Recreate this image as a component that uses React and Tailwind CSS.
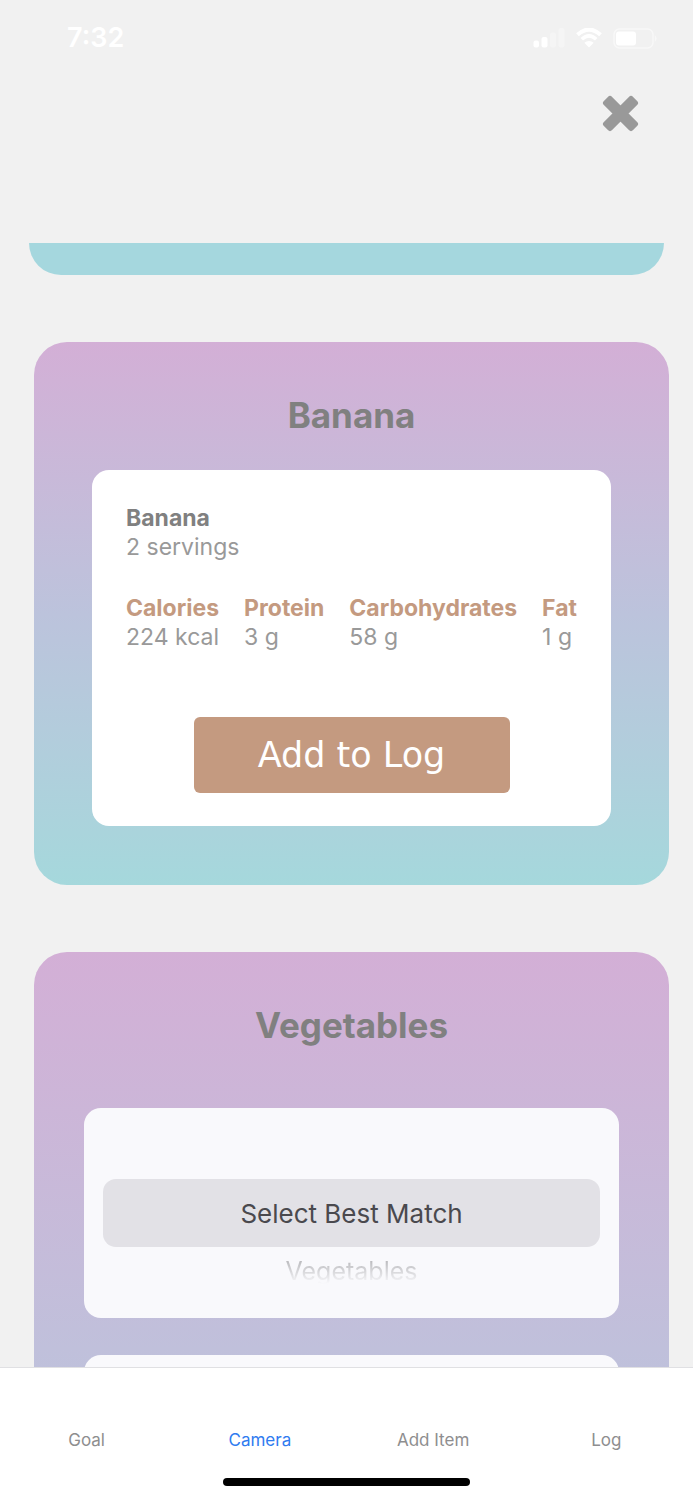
import { useState } from "react";

const nutrients = [
  { label: "Calories", value: "224 kcal" },
  { label: "Protein", value: "3 g" },
  { label: "Carbohydrates", value: "58 g" },
  { label: "Fat", value: "1 g" },
];

const tabs = ["Goal", "Camera", "Add Item", "Log"];

const StatusBar = () => {
  return (
    <div className="flex h-[76px] items-center justify-between pr-[35px] pl-[67px] text-white">
      <span className="text-[27px] leading-8 font-semibold">7:32</span>
      <div className="flex items-center gap-[11px]">
        <svg width="32" height="20" viewBox="0 0 32 20" fill="currentColor">
          <rect x="0.5" y="12.5" width="5.5" height="7" rx="2" />
          <rect x="8.5" y="9" width="6" height="10.5" rx="2" />
          <rect x="17" y="4.5" width="6" height="15" rx="2" opacity="0.3" />
          <rect x="25.5" y="0" width="6" height="19.5" rx="2" opacity="0.3" />
        </svg>
        <svg width="26" height="20" viewBox="0 0 26 20" fill="none">
          <path
            d="M1.5 6.7 Q13 -3.6 24.5 6.7"
            stroke="currentColor"
            strokeWidth="4"
          />
          <path
            d="M5.8 11.3 Q13 4.6 20.2 11.3"
            stroke="currentColor"
            strokeWidth="3.6"
          />
          <path d="M8.3 14.8 Q13 11 17.7 14.8 L13 19.6 Z" fill="currentColor" />
        </svg>
        <svg width="45" height="21" viewBox="0 0 45 21" fill="none">
          <rect
            x="1"
            y="1"
            width="39"
            height="19"
            rx="5.5"
            stroke="currentColor"
            strokeWidth="1.5"
            opacity="0.5"
          />
          <rect x="3" y="3.5" width="20" height="14" rx="3" fill="currentColor" />
          <path d="M41.8 7 Q45.5 10.5 41.8 14 Z" fill="currentColor" opacity="0.5" />
        </svg>
      </div>
    </div>
  );
};

const FoodCard = ({ title, children }) => {
  return (
    <section className="rounded-[33px] bg-linear-to-b from-[#d3afd6] via-[#bcc3dc] to-[#a5d8dc] pt-12">
      <h2 className="text-center text-[35px] leading-[50px] font-bold text-[#808080]">
        {title}
      </h2>
      {children}
    </section>
  );
};

const App = () => {
  const [activeTab, setActiveTab] = useState("Camera");
  const [match, setMatch] = useState("");

  return (
    <div className="flex h-screen flex-col overflow-hidden bg-[#f1f1f1] font-['Inter','Liberation_Sans',sans-serif]">
      <header className="h-[243px] shrink-0">
        <StatusBar />
        <div className="flex justify-end pt-[19px] pr-[54px]">
          <button type="button" aria-label="Close" className="text-[#999999]">
            <svg width="37" height="37" viewBox="0 0 37 37">
              <path
                d="M8 4 L4 8 L29 33 L33 29 Z M29 4 L33 8 L8 33 L4 29 Z"
                fill="currentColor"
                stroke="currentColor"
                strokeWidth="6"
                strokeLinejoin="round"
              />
            </svg>
          </button>
        </div>
      </header>

      <main className="min-h-0 flex-1 overflow-hidden">
        <div className="mx-[29px] h-8 rounded-b-[33px] bg-[#a5d7de]" />

        <div className="mt-[67px] mr-6 ml-[34px] space-y-[67px]">
          <FoodCard title="Banana">
            <div className="px-[58px] pt-[30px] pb-[59px]">
              <div className="rounded-[17px] bg-white px-[34px] pt-[34px] pb-[33px] text-[23px] leading-[29px] text-[#999999]">
                <h3 className="font-bold text-[#808080]">Banana</h3>
                <p>2 servings</p>

                <dl className="mt-8 flex justify-between">
                  {nutrients.map((item) => (
                    <div key={item.label}>
                      <dt className="font-bold text-[#c49a80]">{item.label}</dt>
                      <dd>{item.value}</dd>
                    </div>
                  ))}
                </dl>

                <button
                  type="button"
                  className="mx-auto mt-[65px] block h-[76px] w-[316px] rounded-md bg-[#c49a80] font-['DejaVu_Sans',sans-serif] text-[35px] text-white"
                >
                  Add to Log
                </button>
              </div>
            </div>
          </FoodCard>

          <FoodCard title="Vegetables">
            <div className="space-y-[37px] px-[50px] pt-[58px] pb-[59px]">
              <div className="h-[210px] rounded-[17px] bg-[#f9f9fc] px-[19px] pt-[71px]">
                <select
                  aria-label="Select Best Match"
                  value={match}
                  onChange={(e) => setMatch(e.target.value)}
                  className="block h-[68px] w-full appearance-none rounded-[13px] bg-[#e2e1e6] text-center text-[26px] text-[#4a494e]"
                >
                  <option value="">Select Best Match</option>
                  <option value="vegetables">Vegetables</option>
                </select>
                <p className="mt-2 bg-linear-to-b from-[#bdbdc0] from-20% to-[#f9f9fc] to-90% bg-clip-text text-center text-[25px] leading-8 text-transparent">
                  Vegetables
                </p>
              </div>
              <div className="h-[480px] rounded-[17px] bg-[#f9f9fc]" />
            </div>
          </FoodCard>
        </div>
      </main>

      <nav className="shrink-0 border-t border-[#e0e0e3] bg-white pt-[58px] pb-[14px]">
        <div className="grid grid-cols-4">
          {tabs.map((tab) => (
            <button
              key={tab}
              type="button"
              onClick={() => setActiveTab(tab)}
              className={
                tab === activeTab
                  ? "text-[17px] leading-7 text-[#2f7bf0]"
                  : "text-[17px] leading-7 text-[#8e8e8f]"
              }
            >
              {tab}
            </button>
          ))}
        </div>
        <div className="mx-auto mt-6 h-2 w-[247px] rounded-full bg-black" />
      </nav>
    </div>
  );
};

export default App;
